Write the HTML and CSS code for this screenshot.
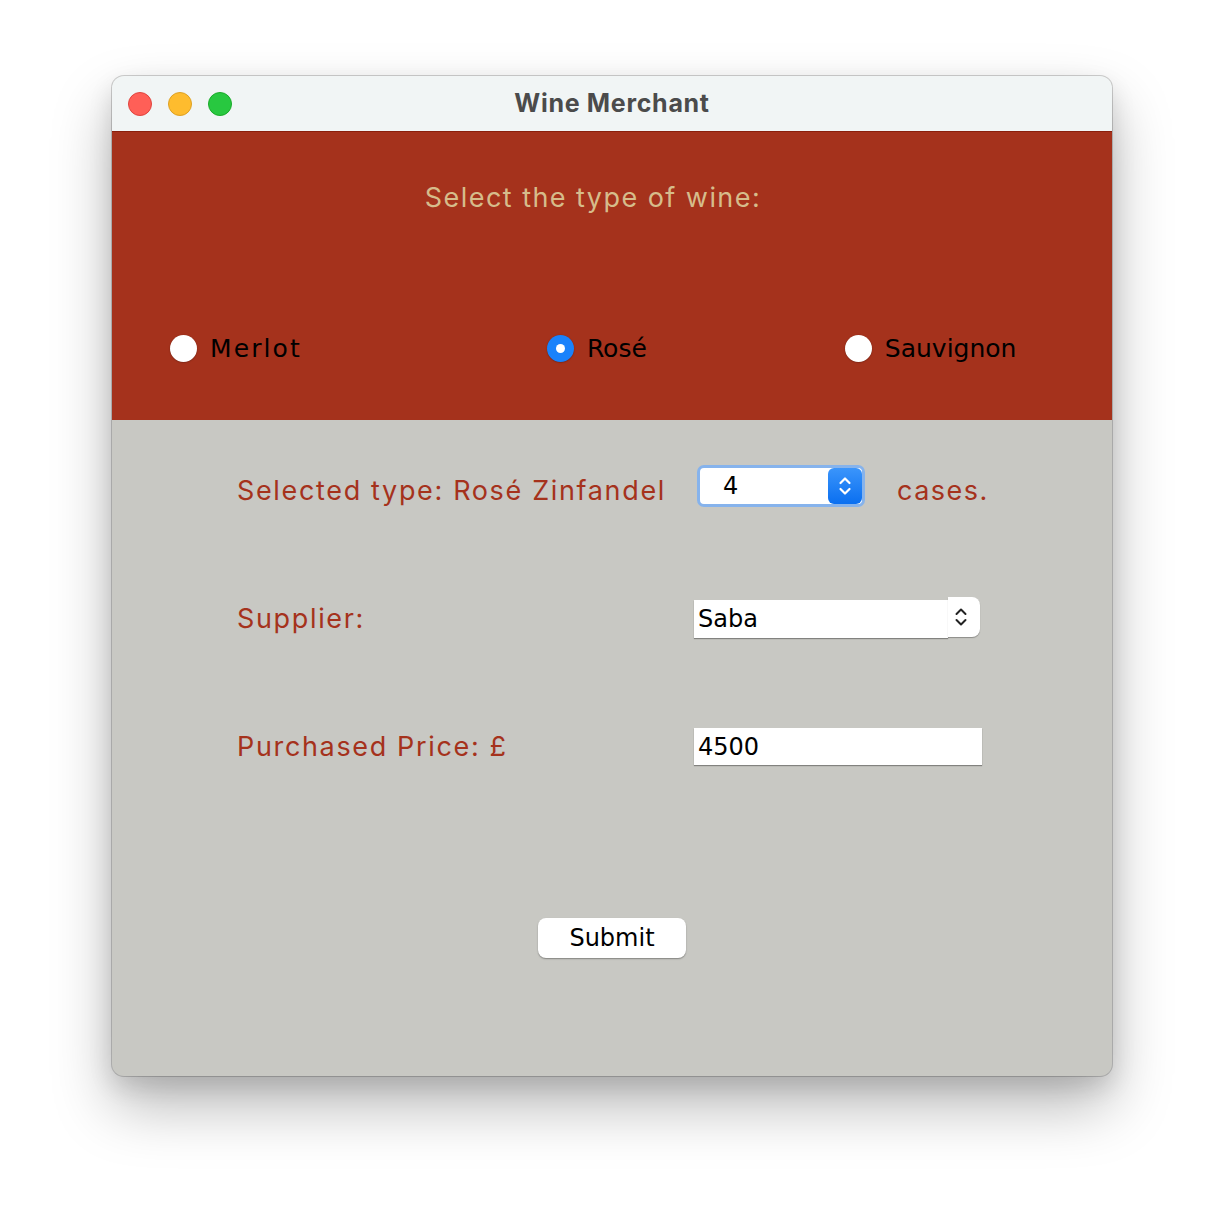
FILE: index.html
```html
<!DOCTYPE html>
<html>
<head>
<meta charset="utf-8">
<title>Wine Merchant</title>
<link rel="stylesheet" href="styles.css">
</head>
<body>
<div class="window">
  <div class="titlebar">
    <div class="lights">
      <span class="light red"></span>
      <span class="light yellow"></span>
      <span class="light green"></span>
    </div>
    <div class="title">Wine Merchant</div>
  </div>
  <div class="top">
    <div class="heading">Select the type of wine:</div>
    <div class="radios">
      <label class="radio r1"><span class="dot"></span><span class="rlabel wide">Merlot</span></label>
      <label class="radio r2"><span class="dot on"></span><span class="rlabel">Rosé</span></label>
      <label class="radio r3"><span class="dot"></span><span class="rlabel">Sauvignon</span></label>
    </div>
  </div>
  <div class="bottom">
    <div class="row">
      <div class="label">Selected type: Rosé Zinfandel</div>
      <div class="ctrl ctrl-spin">
        <div class="spinner">
          <span class="spin-val">4</span>
          <span class="stepper">
            <svg width="14" height="22" viewBox="0 0 14 22"><path d="M2.5 8 L7 3.5 L11.5 8 M2.5 14 L7 18.5 L11.5 14" fill="none" stroke="#fff" stroke-width="2.2" stroke-linecap="round" stroke-linejoin="round"/></svg>
          </span>
        </div>
        <span class="cases">cases.</span>
      </div>
    </div>
    <div class="row">
      <div class="label">Supplier:</div>
      <div class="ctrl">
        <div class="combo">
          <span class="combo-field">Saba</span>
          <span class="combo-btn">
            <svg width="14" height="22" viewBox="0 0 14 22"><path d="M2.5 8 L7 3.5 L11.5 8 M2.5 14 L7 18.5 L11.5 14" fill="none" stroke="#222" stroke-width="2" stroke-linecap="round" stroke-linejoin="round"/></svg>
          </span>
        </div>
      </div>
    </div>
    <div class="row">
      <div class="label">Purchased Price: £</div>
      <div class="ctrl">
        <div class="field">4500</div>
      </div>
    </div>
    <div class="submit-row">
      <button class="submit">Submit</button>
    </div>
  </div>
</div>
</body>
</html>
```
FILE: styles.css
```css
html, body {
  margin: 0;
  padding: 0;
  background: #ffffff;
}
body {
  width: 1224px;
  height: 1224px;
  padding-top: 76px;
  padding-left: 112px;
  box-sizing: border-box;
}
.window {
  width: 1000px;
  height: 1000px;
  border-radius: 12px;
  overflow: hidden;
  background: #c8c8c3;
  box-shadow: 0 0 0 1px rgba(0,0,0,0.18), 0 30px 60px rgba(0,0,0,0.28), 0 10px 25px rgba(0,0,0,0.12);
  display: flex;
  flex-direction: column;
}
.titlebar {
  height: 55px;
  background: #f1f5f5;
  border-bottom: 1px solid #8a1f0c;
  position: relative;
  display: flex;
  align-items: center;
  justify-content: center;
  flex-shrink: 0;
}
.lights {
  position: absolute;
  left: 16px;
  top: 16px;
  display: flex;
  gap: 16px;
}
.light {
  width: 24px;
  height: 24px;
  border-radius: 50%;
  box-sizing: border-box;
}
.light.red { background: #ff5f57; border: 1px solid #e0443e; }
.light.yellow { background: #febc2e; border: 1px solid #dea123; }
.light.green { background: #28c840; border: 1px solid #1aab29; }
.title {
  font-family: "Inter", "Liberation Sans", sans-serif;
  font-weight: 700;
  font-size: 25px;
  letter-spacing: 0.7px;
  color: #4b4b4b;
  margin-top: -2px;
}
.top {
  height: 288px;
  background: #a5321c;
  display: flex;
  flex-direction: column;
  flex-shrink: 0;
}
.heading {
  font-family: "Inter", "Liberation Sans", sans-serif;
  font-size: 27px;
  letter-spacing: 1.45px;
  color: #d6bc8b;
  text-align: center;
  margin-top: 48px;
  margin-left: -38px;
  line-height: 36px;
}
.radios {
  display: flex;
  margin-top: 112px;
  height: 40px;
  align-items: center;
  position: relative;
}
.radio {
  display: flex;
  align-items: center;
  gap: 13px;
}
.r1 { margin-left: 58px; }
.r2 { margin-left: 245px; }
.r3 { margin-left: 198px; }
.dot {
  width: 27px;
  height: 27px;
  border-radius: 50%;
  background: #ffffff;
  box-shadow: 0 0.5px 1.5px rgba(0,0,0,0.35);
  box-sizing: border-box;
  position: relative;
}
.dot.on {
  background: #1a82fb;
}
.dot.on::after {
  content: "";
  position: absolute;
  left: 9px;
  top: 9px;
  width: 9px;
  height: 9px;
  border-radius: 50%;
  background: #ffffff;
}
.rlabel {
  font-family: "DejaVu Sans", "Liberation Sans", sans-serif;
  font-size: 25px;
  letter-spacing: 0;
  color: #000000;
}
.rlabel.wide {
  letter-spacing: 2.1px;
}
.bottom {
  flex: 1;
  padding-top: 6px;
  display: flex;
  flex-direction: column;
}
.row {
  height: 128px;
  display: flex;
  align-items: center;
}
.label {
  width: 457px;
  padding-left: 125px;
  font-family: "Inter", "Liberation Sans", sans-serif;
  font-size: 27px;
  letter-spacing: 1.65px;
  color: #a5321c;
  flex-shrink: 0;
}
.ctrl {
  display: flex;
  align-items: center;
}
.ctrl-spin {
  margin-left: 3px;
}
.spinner {
  width: 168px;
  height: 42px;
  box-sizing: border-box;
  border-radius: 7px;
  border: 3px solid #86b3ec;
  background: #ffffff;
  display: flex;
  align-items: center;
  justify-content: space-between;
  padding-left: 23px;
  padding-right: 0px;
  margin-top: -8px;
}
.spin-val {
  font-family: "DejaVu Sans", "Liberation Sans", sans-serif;
  font-size: 24px;
  color: #000;
  margin-top: 0;
}
.stepper {
  width: 34px;
  height: 36px;
  border-radius: 6px;
  background: linear-gradient(#3b95fb, #0a6ff0);
  display: flex;
  align-items: center;
  justify-content: center;
}
.cases {
  margin-left: 32px;
  font-family: "Inter", "Liberation Sans", sans-serif;
  font-size: 27px;
  letter-spacing: 1.5px;
  color: #a5321c;
}
.combo {
  display: flex;
  align-items: flex-start;
  height: 42px;
}
.combo-field {
  width: 254px;
  height: 38px;
  margin-top: 3px;
  background: #ffffff;
  box-shadow: 0 1px 1px rgba(0,0,0,0.35);
  box-sizing: border-box;
  padding-left: 4px;
  font-family: "DejaVu Sans", "Liberation Sans", sans-serif;
  font-size: 24px;
  line-height: 38px;
  color: #000;
}
.combo-btn {
  width: 32px;
  height: 40px;
  background: #ffffff;
  border-radius: 0 8px 8px 0;
  box-shadow: 0 1px 1px rgba(0,0,0,0.3);
  display: flex;
  align-items: center;
  justify-content: center;
  padding-right: 6px;
  box-sizing: border-box;
}
.field {
  width: 288px;
  height: 37px;
  background: #ffffff;
  box-shadow: 0 1px 1px rgba(0,0,0,0.35);
  box-sizing: border-box;
  padding-left: 4px;
  font-family: "DejaVu Sans", "Liberation Sans", sans-serif;
  font-size: 24px;
  line-height: 38px;
  color: #000;
  margin-top: 1px;
}
.submit-row {
  display: flex;
  justify-content: center;
  margin-top: 108px;
}
.submit {
  width: 148px;
  height: 40px;
  border: none;
  border-radius: 8px;
  background: #ffffff;
  box-shadow: 0 1px 1.5px rgba(0,0,0,0.35);
  font-family: "DejaVu Sans", "Liberation Sans", sans-serif;
  font-size: 24px;
  color: #000;
  padding: 0;
  line-height: 38px;
}
```
